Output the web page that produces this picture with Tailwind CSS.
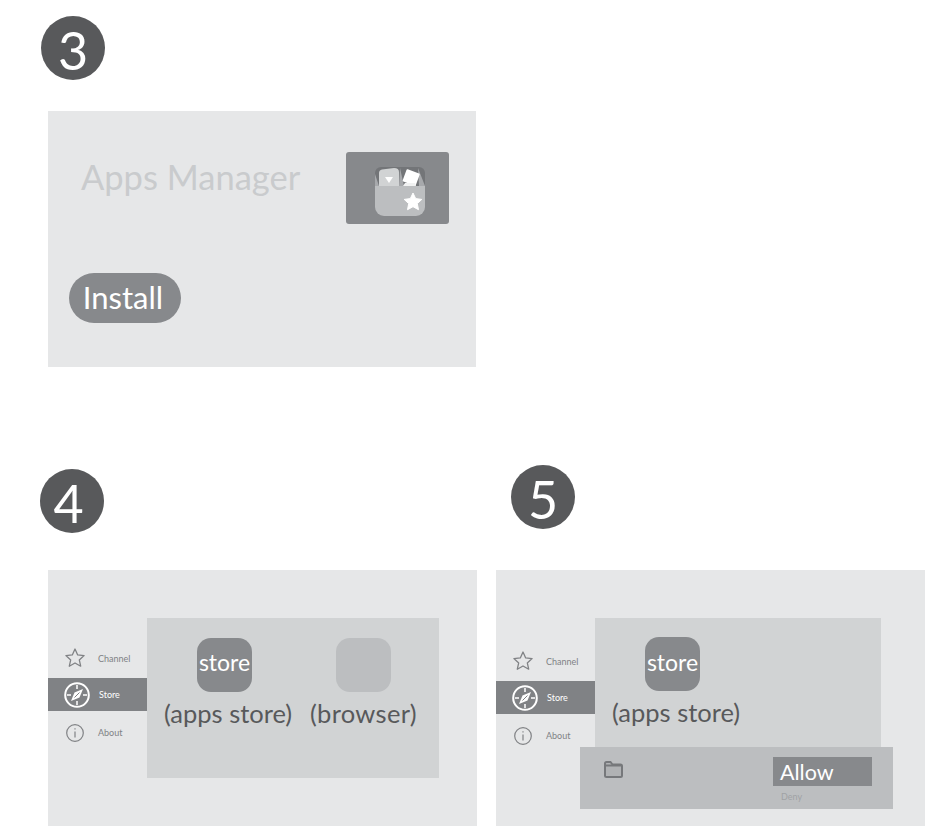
<!DOCTYPE html>
<html lang="en">
<head>
    <meta charset="UTF-8">
    <title>Apps Manager install steps</title>
    <script src="https://cdn.jsdelivr.net/npm/@tailwindcss/browser@4"></script>
</head>
<body class="bg-white font-['Lato',sans-serif] text-[#58595b] overflow-hidden">
<div class="w-[947px] h-[834px]">

    <!-- Step 3 -->
    <section class="pt-[16px] pl-[41px] h-[465px]">
        <div class="w-[64px] h-[64px] rounded-full bg-[#58595b] text-white text-[52px] leading-none pt-[4px] flex items-center justify-center">3</div>
        <div class="ml-[7px] mt-[31px] w-[428px] h-[256px] bg-[#e6e7e8] flex flex-col">
            <div class="flex justify-between pt-[41px] pl-[33px] pr-[27px]">
                <h1 class="text-[34.500px] leading-[50px] text-[#c9cbcd] whitespace-nowrap">Apps Manager</h1>
                <div class="w-[103px] h-[72px] rounded-[3px] bg-[#87898c]">
                    <svg width="103" height="72" viewBox="0 0 103 72">
                        <path d="M29 34V21a6 6 0 0 1 6-6h38a6 6 0 0 1 6 6v13z" fill="#737578"/>
                        <path d="M29 22l4 12h-4zM54 16l4 18h-5zM72 16l7 18h-6z" fill="#a7a9ac"/>
                        <path d="M33 34V21q0-3 3-3.500l12-1.500q5 0 5 4v14z" fill="#d1d3d4"/>
                        <path d="M39 25h8l-4 6z" fill="#fff"/>
                        <rect x="58" y="19" width="14" height="13" rx="1" transform="rotate(20 65 26)" fill="#fff"/>
                        <path d="M57 34l2-3h10l1 3z" fill="#f1f2f2"/>
                        <path d="M29 34h50v21a9 9 0 0 1-9 9H38a9 9 0 0 1-9-9z" fill="#bcbec0"/>
                        <path d="M67 41l2.700 5.600 6.100.800-4.500 4.200 1.200 6.100-5.500-3-5.500 3 1.200-6.100-4.500-4.200 6.100-.800z" fill="#fff" stroke="#fff" stroke-linejoin="round"/>
                    </svg>
                </div>
            </div>
            <div class="ml-[21px] mt-[49px] w-[112px] h-[50px] rounded-full bg-[#87898c] text-white text-[31px] pr-[4px] pb-[2px] flex items-center justify-center">Install</div>
        </div>
    </section>

    <div class="flex">
        <!-- Step 4 -->
        <section class="pl-[40px] pt-[4px] w-[496px]">
            <div class="w-[64px] h-[64px] rounded-full bg-[#58595b] text-white text-[52px] leading-none pt-[4px] pr-[7px] flex items-center justify-center">4</div>
            <div class="ml-[8px] mt-[37px] w-[429px] h-[256px] bg-[#e6e7e8] flex pt-[48px]">
                <nav class="w-[99px] pt-[20px] text-[9px] text-[#808285]">
                    <div class="h-[40px] flex items-center gap-[13px] pl-[17px]">
                        <svg class="w-[20px] h-[20px]" viewBox="0 0 20 20" fill="none" stroke="#808285" stroke-width="1.300" stroke-linejoin="round"><path d="M10 1l2.700 5.900 6.400.700-4.800 4.300 1.400 6.300-5.700-3.200-5.700 3.200 1.400-6.300L.9 7.600l6.400-.700z"/></svg>
                        <span class="pt-[1px]">Channel</span>
                    </div>
                    <div class="h-[33px] flex items-center gap-[9px] pl-[16px] bg-[#808285] text-white">
                        <svg class="w-[26px] h-[26px]" viewBox="0 0 26 26" fill="none" stroke="#fff">
                            <circle cx="13" cy="13" r="11.800" stroke-width="2"/>
                            <path d="M13 3v4M13 19v4M3 13h4M19 13h4" stroke-width="1.500"/>
                            <path d="M19 7l-3.500 8.500L7 19l3.500-8.500z" fill="#fff" stroke="none"/>
                            <path d="M10.500 15.500l5-5" stroke="#808285"/>
                        </svg>
                        <span>Store</span>
                    </div>
                    <div class="h-[44px] flex items-center gap-[14px] pl-[18px]">
                        <svg class="w-[18px] h-[18px]" viewBox="0 0 18 18" fill="none" stroke="#808285" stroke-width="1.200"><circle cx="9" cy="9" r="8.300"/><path d="M9 7.500v6M9 4.200v1.300"/></svg>
                        <span>About</span>
                    </div>
                </nav>
                <div class="w-[292px] h-[160px] bg-[#d1d3d4] pl-[17px] pt-[20px] flex gap-[18px] text-[25.500px] whitespace-nowrap">
                    <div class="w-[128px]">
                        <div class="ml-[33px] w-[55px] h-[54px] rounded-[14px] bg-[#87898c] text-white text-[23px] pb-[5px] flex items-center justify-center">store</div>
                        <p class="leading-[42px]">(apps store)</p>
                    </div>
                    <div class="w-[107px]">
                        <div class="ml-[26px] w-[55px] h-[54px] rounded-[14px] bg-[#bcbec0]"></div>
                        <p class="leading-[42px] tracking-[0.3px]">(browser)</p>
                    </div>
                </div>
            </div>
        </section>

        <!-- Step 5 -->
        <section class="w-[451px]">
            <div class="ml-[15px] w-[64px] h-[64px] rounded-full bg-[#58595b] text-white text-[52px] leading-none pt-[4px] flex items-center justify-center">5</div>
            <div class="relative mt-[41px] w-[429px] h-[256px] bg-[#e6e7e8] flex pt-[48px]">
                <nav class="w-[99px] pt-[23px] text-[9px] text-[#808285]">
                    <div class="h-[40px] flex items-center gap-[13px] pl-[17px]">
                        <svg class="w-[20px] h-[20px]" viewBox="0 0 20 20" fill="none" stroke="#808285" stroke-width="1.300" stroke-linejoin="round"><path d="M10 1l2.700 5.900 6.400.700-4.800 4.300 1.400 6.300-5.700-3.200-5.700 3.200 1.400-6.300L.9 7.600l6.400-.700z"/></svg>
                        <span class="pt-[1px]">Channel</span>
                    </div>
                    <div class="h-[33px] flex items-center gap-[9px] pl-[16px] bg-[#808285] text-white">
                        <svg class="w-[26px] h-[26px]" viewBox="0 0 26 26" fill="none" stroke="#fff">
                            <circle cx="13" cy="13" r="11.800" stroke-width="2"/>
                            <path d="M13 3v4M13 19v4M3 13h4M19 13h4" stroke-width="1.500"/>
                            <path d="M19 7l-3.500 8.500L7 19l3.500-8.500z" fill="#fff" stroke="none"/>
                            <path d="M10.500 15.500l5-5" stroke="#808285"/>
                        </svg>
                        <span>Store</span>
                    </div>
                    <div class="h-[44px] flex items-center gap-[14px] pl-[18px]">
                        <svg class="w-[18px] h-[18px]" viewBox="0 0 18 18" fill="none" stroke="#808285" stroke-width="1.200"><circle cx="9" cy="9" r="8.300"/><path d="M9 7.500v6M9 4.200v1.300"/></svg>
                        <span>About</span>
                    </div>
                </nav>
                <div class="w-[286px] h-[129px] bg-[#d1d3d4] pl-[17px] pt-[19px] text-[25.500px] whitespace-nowrap">
                    <div class="ml-[33px] w-[55px] h-[54px] rounded-[14px] bg-[#87898c] text-white text-[23px] pb-[4px] flex items-center justify-center">store</div>
                    <p class="leading-[42px]">(apps store)</p>
                </div>
                <!-- permission dialog over the page -->
                <div class="absolute left-[84px] top-[177px] w-[313px] h-[62px] bg-[#bcbec0] flex justify-between pl-[24px] pr-[21px] pt-[10px]">
                    <svg class="w-[19px] h-[17px] mt-[4px]" viewBox="0 0 19 17" fill="#b0b2b4" stroke="#76787b" stroke-width="2"><path d="M1 15V2.500Q1 1 2.500 1h4l2 2.500h8Q18 3.500 18 5v9.500q0 1.500-1.500 1.500h-14Q1 16 1 15z"/><path d="M1 4.500h17" stroke-width="2"/></svg>
                    <div class="w-[99px]">
                        <div class="h-[29px] bg-[#87898c] text-white text-[21.500px] leading-[30px] pl-[7px]">Allow</div>
                        <div class="mt-[5px] pl-[8px] text-[9px] leading-[12px] text-[#a0a2a5]">Deny</div>
                    </div>
                </div>
            </div>
        </section>
    </div>
</div>
</body>
</html>
